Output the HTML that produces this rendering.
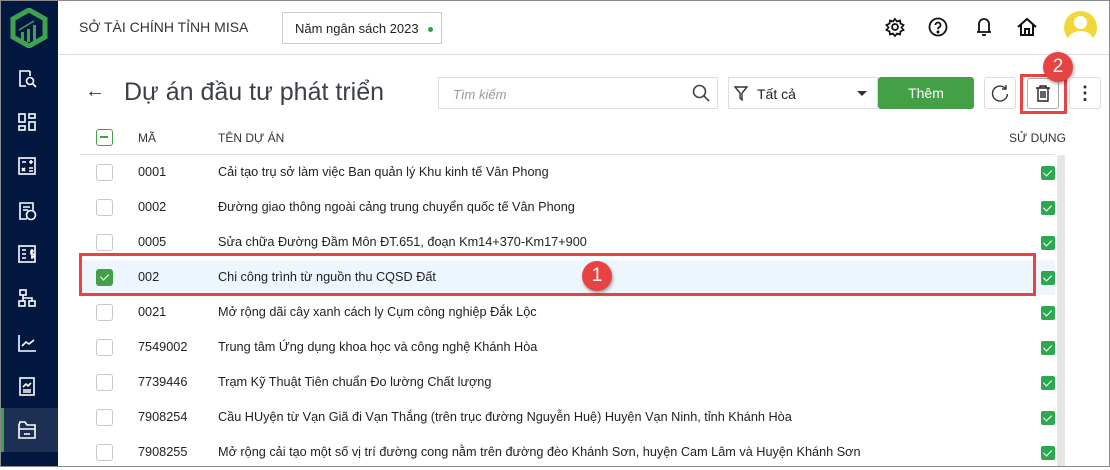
<!DOCTYPE html>
<html><head><meta charset="utf-8"><style>
*{box-sizing:border-box;margin:0;padding:0}
body{width:1110px;height:467px;overflow:hidden;background:#fff;font-family:"Liberation Sans",sans-serif;color:#222;position:relative}
.frame{position:absolute;inset:0;border:1px solid #8a8a8a;pointer-events:none;z-index:20}
.side{position:absolute;left:0;top:0;width:58px;height:467px;background:#021840}
.side svg{position:absolute;left:17px}
.active{position:absolute;left:0;top:408px;width:58px;height:44px;background:#1d2f52;border-left:4px solid #3fa34d}
.top{position:absolute;left:58px;top:0;right:0;height:55px;border-bottom:1px solid #ddd}
.abs{position:absolute;white-space:nowrap}
.row{position:absolute;left:80px;width:975px;height:35px;font-size:12.7px}
.row span{position:absolute;top:10px;white-space:nowrap}
.cb{position:absolute;left:16px;top:9px;width:17px;height:17px;border:1px solid #c8c8c8;border-radius:3px;background:#fff}
.ok{position:absolute;left:961px;top:11px;width:14px;height:14px;border-radius:2px;background:#2ea84f}
.ok:after{content:"";position:absolute;left:4px;top:2px;width:4px;height:7px;border:solid #fff;border-width:0 1.5px 1.5px 0;transform:rotate(45deg)}
.badge{position:absolute;width:30px;height:30px;border-radius:50%;background:#e84343;color:#fff;font-size:19px;text-align:center;line-height:30px;box-shadow:1px 2px 3px rgba(0,0,0,.35)}
</style></head><body>
<div class="frame"></div>
<div class="side">
<svg style="left:10px;top:8px" width="38" height="40" viewBox="0 0 38 40"><path d="M19 2 L35 11 V29 L19 38 L3 29 V11 Z" fill="none" stroke="#3fa34d" stroke-width="5"/><rect x="11" y="24" width="3" height="10" fill="#3fa34d"/><rect x="17" y="21" width="3" height="13" fill="#3fa34d"/><rect x="23" y="17" width="3" height="17" fill="#3fa34d"/><path d="M9 22 L24 13" stroke="#3fa34d" stroke-width="1.5"/></svg>
<svg style="top:68px" width="20" height="20" fill="none" stroke="#fff" stroke-width="1.6"><path d="M13 3H3V18H9"/><path d="M13 3V8"/><circle cx="13" cy="13" r="3.5"/><path d="M15.5 15.5L19 19"/></svg>
<svg style="top:112px" width="20" height="20" fill="none" stroke="#fff" stroke-width="1.6"><rect x="2" y="2" width="6" height="8"/><rect x="12" y="2" width="6" height="4"/><rect x="2" y="14" width="6" height="4"/><rect x="12" y="10" width="6" height="8"/></svg>
<svg style="top:156px" width="20" height="20" fill="none" stroke="#fff" stroke-width="1.6"><rect x="2" y="2" width="16" height="16"/><path d="M5 6h4M12 6h4M14 4v4M5 12l3 3M8 12l-3 3M12 12h4M12 15h4"/></svg>
<svg style="top:201px" width="20" height="20" fill="none" stroke="#fff" stroke-width="1.6"><path d="M10 18H3V2H16V9"/><path d="M6 6h7M6 9h5"/><circle cx="14" cy="14" r="4.5"/></svg>
<svg style="top:244px" width="20" height="20" fill="none" stroke="#fff" stroke-width="1.6"><rect x="2" y="2" width="16" height="16"/><path d="M5 6h4M5 10h4M5 14h4M15 5v10M17 7h-3v3h3v3h-3"/></svg>
<svg style="top:288px" width="20" height="20" fill="none" stroke="#fff" stroke-width="1.6"><rect x="3" y="2" width="6" height="5"/><rect x="2" y="13" width="6" height="5"/><rect x="12" y="13" width="6" height="5"/><path d="M6 7v3h9v3M6 10v3"/></svg>
<svg style="top:333px" width="20" height="20" fill="none" stroke="#fff" stroke-width="1.6"><path d="M2 2V18H19"/><path d="M5 13l4-4 3 2 5-4"/></svg>
<svg style="top:376px" width="20" height="20" fill="none" stroke="#fff" stroke-width="1.6"><rect x="3" y="2" width="14" height="17"/><path d="M6 11l3-3 2 2 3-3M6 14h8M6 16h8"/></svg>
<div class="active"></div>
<svg style="top:420px" width="20" height="20" fill="none" stroke="#fff" stroke-width="1.6"><path d="M2 5V18H18V5H10L8 2H3Z"/><path d="M2 9H18M7 14h6"/></svg>
</div>
<div class="top">
<div class="abs" style="left:21px;top:19px;font-size:14px;color:#333">SỞ TÀI CHÍNH TỈNH MISA</div>
<div class="abs" style="left:224px;top:12px;width:160px;height:32px;border:1px solid #ccc;font-size:13px;padding:8px 0 0 12px;color:#222">Năm ngân sách 2023 <span style="display:inline-block;width:5px;height:5px;border-radius:50%;background:#22aa44;margin-left:6px;vertical-align:middle"></span></div>
<svg class="abs" style="left:827px;top:17px" width="20" height="20" fill="none" stroke="#111" stroke-width="1.8"><circle cx="10" cy="10" r="3"/><path d="M10 2l2 2.5 3-1 .5 3 3 1.5-2 2.5 2 2.5-3 1.5-.5 3-3-1-2 2.5-2-2.5-3 1-.5-3-3-1.5 2-2.5-2-2.5 3-1.5.5-3 3 1z"/></svg>
<svg class="abs" style="left:870px;top:17px" width="20" height="20" fill="none" stroke="#111" stroke-width="1.8"><circle cx="10" cy="10" r="8.5"/><path d="M7.5 8a2.5 2.5 0 1 1 3.5 2.3c-1 .5-1 1-1 2"/><circle cx="10" cy="15" r=".6" fill="#111"/></svg>
<svg class="abs" style="left:917px;top:16px" width="18" height="22" fill="none" stroke="#111" stroke-width="1.8"><path d="M4 16V8a5 5 0 0 1 10 0v8H2h14M7 19h4"/></svg>
<svg class="abs" style="left:958px;top:17px" width="22" height="20" fill="none" stroke="#111" stroke-width="2"><path d="M2 10L11 2l9 8M5 8v10h12V8M9 18v-6h4v6"/></svg>
<div class="abs" style="left:1006px;top:11px;width:33px;height:33px;border-radius:50%;background:#f2d73a;overflow:hidden"><div class="abs" style="left:10px;top:5px;width:13px;height:13px;border-radius:50%;background:#fff"></div><div class="abs" style="left:4px;top:20px;width:25px;height:18px;border-radius:50%;background:#fff"></div></div>
</div>
<div class="abs" style="left:85px;top:80px;font-size:20px;color:#333">←</div>
<div class="abs" style="left:124px;top:78px;font-size:25px;color:#3a3f48">Dự án đầu tư phát triển</div>
<div class="abs" style="left:438px;top:77px;width:280px;height:32px;border:1px solid #ddd;font-size:13px;font-style:italic;color:#999;padding:9px 0 0 14px">Tìm kiếm</div>
<svg class="abs" style="left:692px;top:84px" width="18" height="18" fill="none" stroke="#444" stroke-width="1.6"><circle cx="7.5" cy="7.5" r="6"/><path d="M12 12l5 5"/></svg>
<div class="abs" style="left:728px;top:77px;width:150px;height:32px;border:1px solid #ddd;font-size:14px;padding:8px 0 0 28px">Tất cả</div>
<svg class="abs" style="left:734px;top:86px" width="14" height="15" fill="none" stroke="#333" stroke-width="1.4"><path d="M1 1h12L8 7v7L6 12V7Z"/></svg>
<div class="abs" style="left:857px;top:91px;border:5px solid transparent;border-top:5px solid #333;border-bottom:0"></div>
<div class="abs" style="left:878px;top:77px;width:96px;height:32px;background:#43a047;border-radius:3px;color:#fff;font-size:14px;text-align:center;line-height:32px">Thêm</div>
<div class="abs" style="left:984px;top:77px;width:32px;height:32px;border:1px solid #ddd;border-radius:3px"></div>
<svg class="abs" style="left:991px;top:84px" width="18" height="18" fill="none" stroke="#333" stroke-width="1.4"><path d="M15 5A7.5 7.5 0 1 0 16.5 10"/><path d="M15 1v4h-4"/></svg>
<div class="abs" style="left:1020px;top:74px;width:47px;height:40px;border:3px solid #e84343"></div>
<div class="abs" style="left:1027px;top:78px;width:32px;height:31px;border:1px solid #aaa;border-radius:3px"></div>
<svg class="abs" style="left:1035px;top:85px" width="16" height="17" fill="none" stroke="#222" stroke-width="1.4"><path d="M1 3h14M5 3V1h6v2M3 3v13h10V3M6 6v7M8 6v7M10 6v7"/></svg>
<div class="badge" style="left:1043px;top:52px">2</div>
<div class="abs" style="left:1069px;top:77px;width:32px;height:32px;border:1px solid #ddd;border-radius:3px;text-align:center;font-size:18px;line-height:30px;font-weight:bold">⋮</div>
<div class="abs" style="left:80px;top:120px;width:975px;height:35px;border-bottom:1px solid #ddd;font-size:12px;color:#333">
<div class="abs" style="left:16px;top:9px;width:17px;height:17px;border:1.5px solid #43a047;border-radius:3px"><div class="abs" style="left:3px;top:6px;width:8px;height:2px;background:#43a047"></div></div>
<span class="abs" style="left:58px;top:11px">MÃ</span><span class="abs" style="left:138px;top:11px">TÊN DỰ ÁN</span><span class="abs" style="left:929px;top:11px">SỬ DỤNG</span></div>
<div class="abs" style="left:1057px;top:155px;width:8px;height:312px;background:#e5e5e5"></div>
<div class="row" style="top:155px"><div class="cb"></div><span style="left:58px">0001</span><span style="left:138px">Cải tạo trụ sở làm việc Ban quản lý Khu kinh tế Vân Phong</span><div class="ok"></div></div>
<div class="row" style="top:190px"><div class="cb"></div><span style="left:58px">0002</span><span style="left:138px">Đường giao thông ngoài cảng trung chuyển quốc tế Vân Phong</span><div class="ok"></div></div>
<div class="row" style="top:225px"><div class="cb"></div><span style="left:58px">0005</span><span style="left:138px">Sửa chữa Đường Đầm Môn ĐT.651, đoạn Km14+370-Km17+900</span><div class="ok"></div></div>
<div class="row" style="top:260px;background:#edf5fd"><div class="cb" style="background:#43a047;border-color:#43a047"></div><div class="abs" style="left:22px;top:12px;width:5px;height:8px;border:solid #fff;border-width:0 1.5px 1.5px 0;transform:rotate(45deg)"></div><span style="left:58px">002</span><span style="left:138px">Chi công trình từ nguồn thu CQSD Đất</span><div class="ok"></div></div>
<div class="row" style="top:295px"><div class="cb"></div><span style="left:58px">0021</span><span style="left:138px">Mở rộng dãi cây xanh cách ly Cụm công nghiệp Đắk Lộc</span><div class="ok"></div></div>
<div class="row" style="top:330px"><div class="cb"></div><span style="left:58px">7549002</span><span style="left:138px">Trung tâm Ứng dụng khoa học và công nghệ Khánh Hòa</span><div class="ok"></div></div>
<div class="row" style="top:365px"><div class="cb"></div><span style="left:58px">7739446</span><span style="left:138px">Trạm Kỹ Thuật Tiên chuẩn Đo lường Chất lượng</span><div class="ok"></div></div>
<div class="row" style="top:400px"><div class="cb"></div><span style="left:58px">7908254</span><span style="left:138px">Cầu HUyện từ Vạn Giã đi Vạn Thắng (trên trục đường Nguyễn Huệ) Huyện Vạn Ninh, tỉnh Khánh Hòa</span><div class="ok"></div></div>
<div class="row" style="top:435px"><div class="cb"></div><span style="left:58px">7908255</span><span style="left:138px">Mở rộng cải tạo một số vị trí đường cong nằm trên đường đèo Khánh Sơn, huyện Cam Lâm và Huyện Khánh Sơn</span><div class="ok"></div></div>
<div class="abs" style="left:79px;top:253px;width:957px;height:43px;border:3px solid #e84343"></div>
<div class="badge" style="left:582px;top:261px">1</div>
</body></html>
